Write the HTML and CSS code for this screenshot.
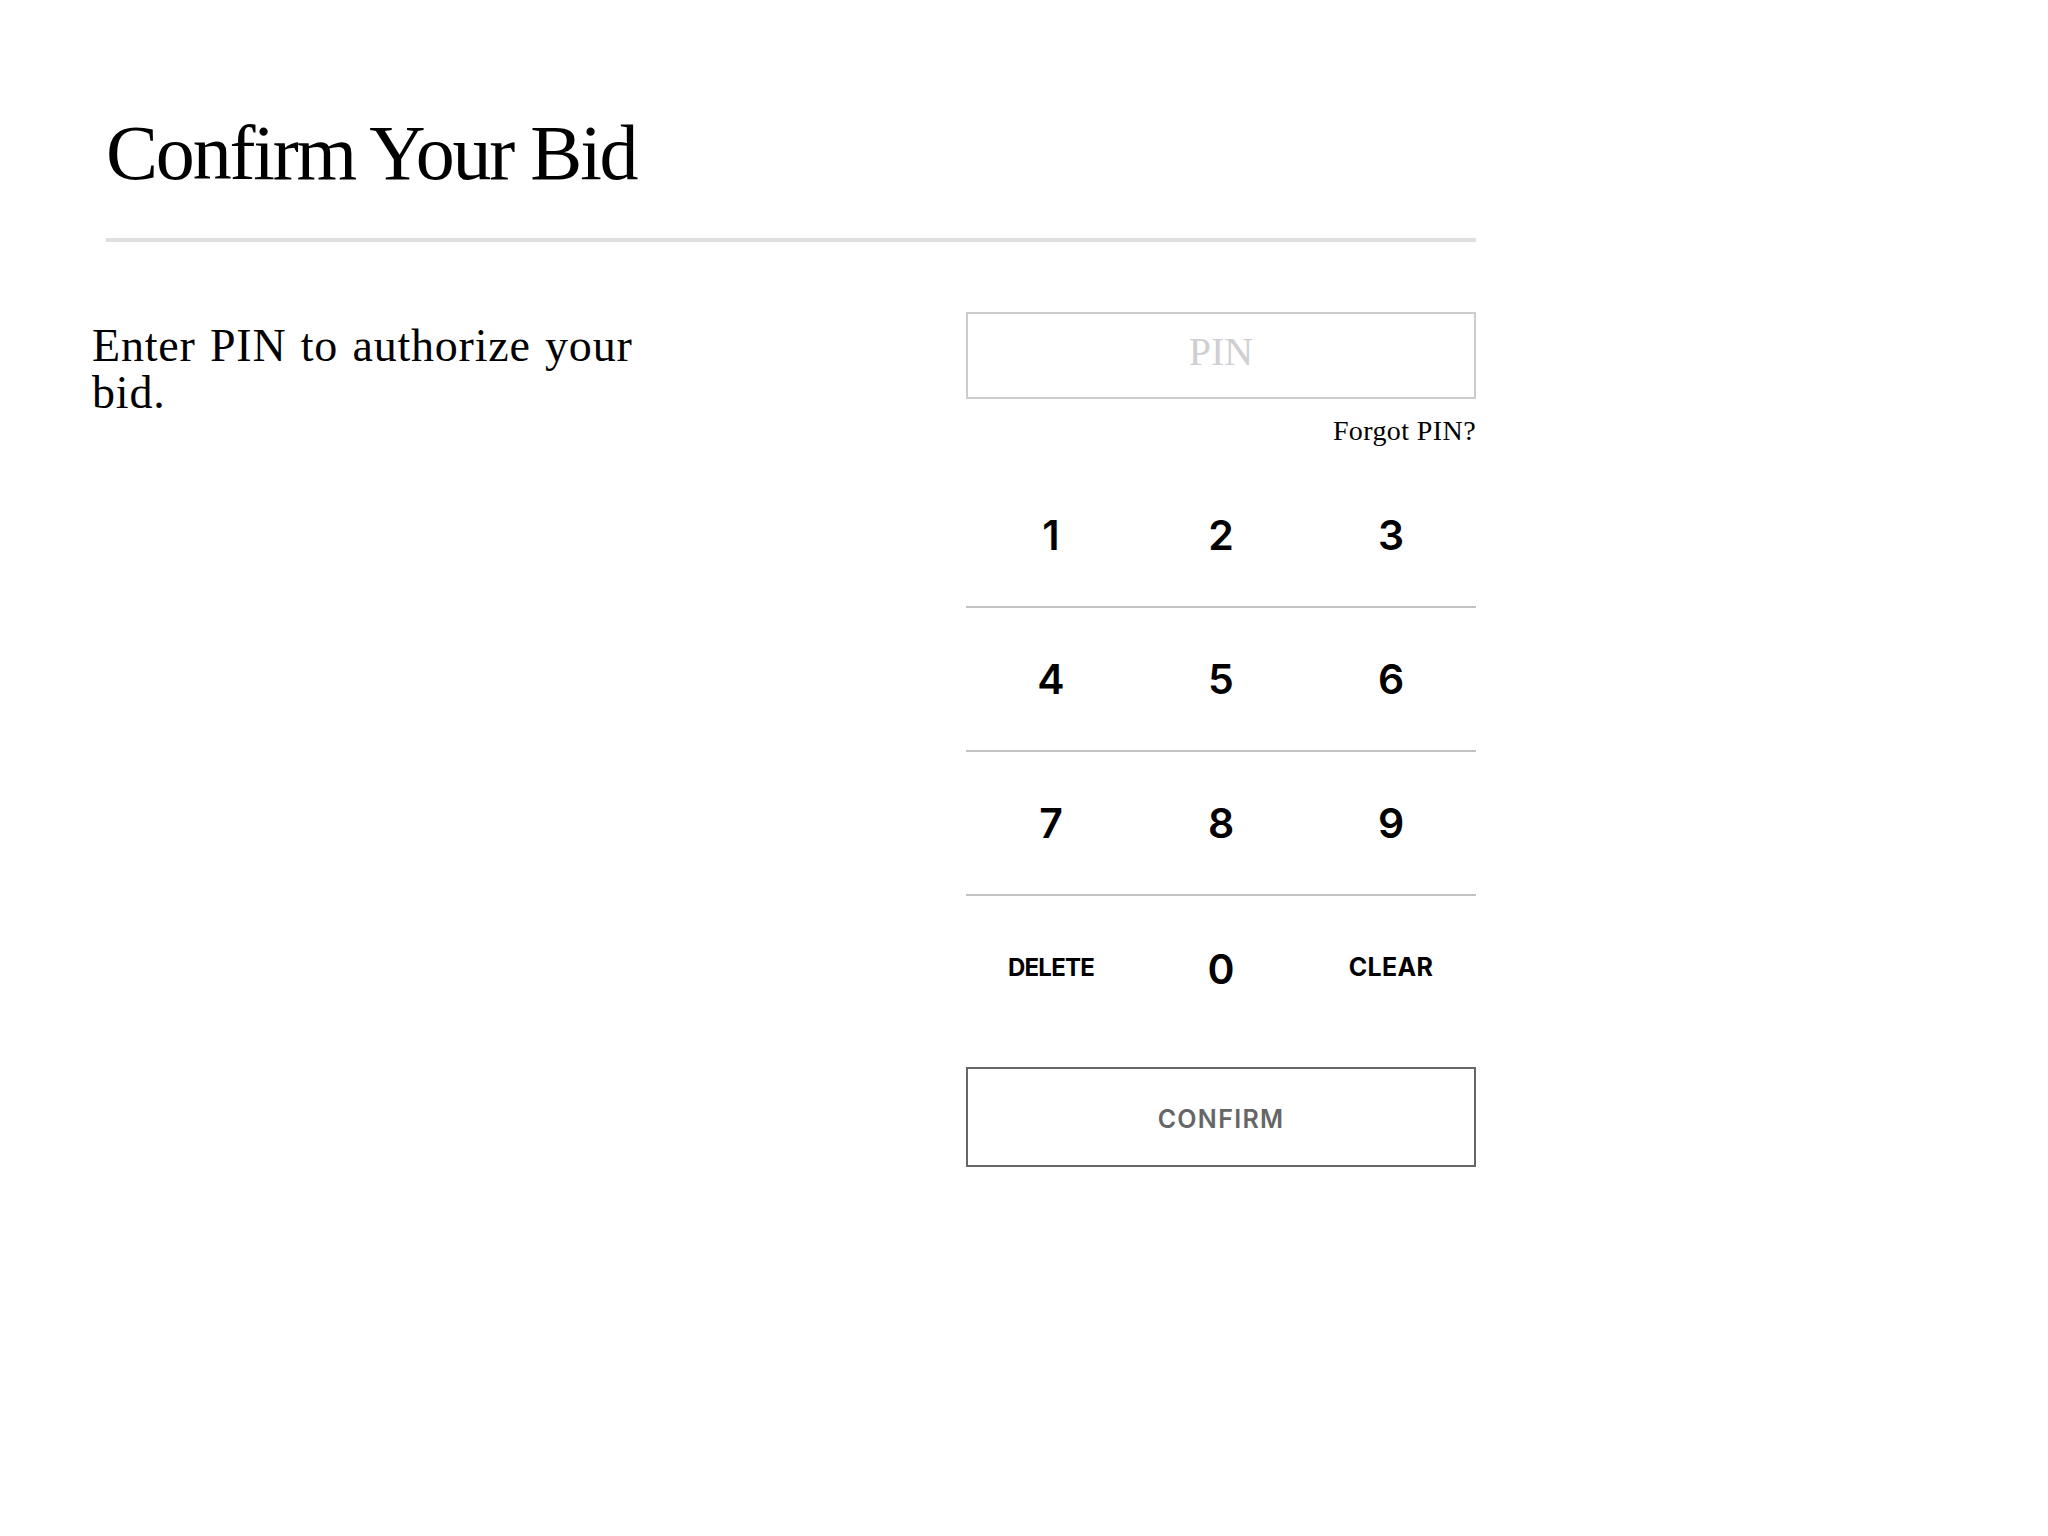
FILE: index.html
```html
<!DOCTYPE html>
<html lang="en">
<head>
<meta charset="utf-8">
<title>Confirm Your Bid</title>
<link rel="stylesheet" href="styles.css">
</head>
<body>
<main class="page">
  <header class="header">
    <h1 class="title">Confirm Your Bid</h1>
    <div class="divider"></div>
  </header>
  <section class="content">
    <p class="lead">Enter PIN to authorize your bid.</p>
    <div class="pin-panel">
      <input class="pin-input" type="password" placeholder="PIN">
      <div class="forgot-row"><a class="forgot" href="#">Forgot PIN?</a></div>
      <div class="keypad">
        <div class="key-row">
          <button class="key">1</button>
          <button class="key">2</button>
          <button class="key">3</button>
        </div>
        <div class="key-row">
          <button class="key">4</button>
          <button class="key">5</button>
          <button class="key">6</button>
        </div>
        <div class="key-row">
          <button class="key">7</button>
          <button class="key">8</button>
          <button class="key">9</button>
        </div>
        <div class="key-row last">
          <button class="key key-word key-delete">DELETE</button>
          <button class="key key-zero">0</button>
          <button class="key key-word">CLEAR</button>
        </div>
      </div>
      <button class="confirm">CONFIRM</button>
    </div>
  </section>
</main>
</body>
</html>
```

FILE: styles.css
```css
html, body {
  margin: 0;
  padding: 0;
  background: #ffffff;
}

body {
  font-family: "Liberation Serif", "Times New Roman", serif;
  color: #000;
}

.page {
  margin-left: 92px;
  width: 1384px;
  padding-top: 114px;
}

.header {
  margin-left: 14px;
}

.title {
  margin: 0;
  font-family: "Liberation Serif", serif;
  font-weight: 400;
  font-size: 78px;
  line-height: 78px;
  letter-spacing: -2.2px;
  color: #000;
}

.divider {
  margin-top: 46px;
  height: 4px;
  background: #e0e0e0;
}

.content {
  display: flex;
  justify-content: space-between;
  align-items: flex-start;
  margin-top: 70px;
}

.lead {
  margin: 10px 0 0 0;
  width: 580px;
  font-size: 46px;
  line-height: 47px;
  letter-spacing: 0.8px;
  word-spacing: 2px;
}

.pin-panel {
  width: 510px;
  display: flex;
  flex-direction: column;
}

.pin-input {
  box-sizing: border-box;
  width: 100%;
  height: 87px;
  margin: 0;
  padding: 0 0 8px 0;
  border: 2px solid #cccccc;
  border-radius: 0;
  outline: none;
  text-align: center;
  font-family: "Liberation Serif", serif;
  font-size: 40px;
  color: #000;
  background: #fff;
}

.pin-input::placeholder {
  color: #cfcfd3;
  opacity: 1;
}

.forgot-row {
  margin-top: 17px;
  display: flex;
  justify-content: flex-end;
  line-height: 30px;
}

.forgot {
  font-family: "Liberation Serif", serif;
  font-size: 28px;
  color: #000;
  text-decoration: none;
  letter-spacing: 0.4px;
}

.keypad {
  margin-top: 18px;
  display: flex;
  flex-direction: column;
}

.key-row {
  display: grid;
  grid-template-columns: repeat(3, 1fr);
  height: 142px;
  border-bottom: 2px solid #c2c2c2;
}

.key-row.last {
  border-bottom: none;
}

.key {
  margin: 0;
  padding: 0;
  border: none;
  background: transparent;
  font-family: "Inter", "Roboto", sans-serif;
  font-weight: 600;
  font-size: 41px;
  color: #000;
  cursor: pointer;
  display: flex;
  align-items: center;
  justify-content: center;
}

.key-zero {
  padding-top: 4px;
}

.key-word {
  font-size: 25px;
  font-weight: 700;
  letter-spacing: 0.3px;
}

.key-delete {
  font-size: 24px;
  letter-spacing: -0.8px;
}

.confirm {
  margin-top: 29px;
  box-sizing: border-box;
  width: 100%;
  height: 100px;
  padding: 4px 0 0 0;
  border: 2.5px solid #666666;
  background: #fff;
  font-family: "Inter", "Roboto", sans-serif;
  font-weight: 600;
  font-size: 25px;
  letter-spacing: 1.3px;
  color: #666666;
  cursor: pointer;
}
```
